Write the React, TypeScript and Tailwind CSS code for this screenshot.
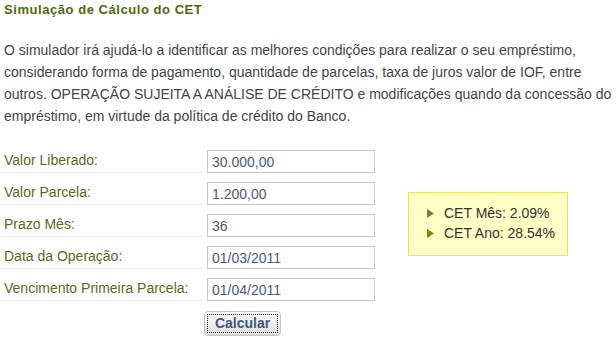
import React from "react";

const fields = [
  { label: "Valor Liberado:", value: "30.000,00" },
  { label: "Valor Parcela:", value: "1.200,00" },
  { label: "Prazo Mês:", value: "36" },
  { label: "Data da Operação:", value: "01/03/2011" },
  { label: "Vencimento Primeira Parcela:", value: "01/04/2011" },
];

const results = ["CET Mês: 2.09%", "CET Ano: 28.54%"];

export default function App() {
  return (
    <div className="w-[616px] h-[338px] overflow-hidden bg-white font-['Liberation_Sans',Arial,sans-serif]">
      <h1 className="pl-1 pt-[1px] text-[13px] leading-[17px] font-bold tracking-[0.55px] text-[#4b6a0f]">
        Simulação de Cálculo do CET
      </h1>

      <p className="mt-[21px] pl-1 pr-1 text-[14px] leading-[22px] text-[#444]">
        O simulador irá ajudá-lo a identificar as melhores condições para realizar o seu empréstimo,
        considerando forma de pagamento, quantidade de parcelas, taxa de juros valor de IOF, entre
        outros. OPERAÇÃO SUJEITA A ANÁLISE DE CRÉDITO e modificações quando da concessão do
        empréstimo, em virtude da política de crédito do Banco.
      </p>

      <div className="mt-[14px] flex items-start">
        <form className="flex flex-col" onSubmit={(e) => e.preventDefault()}>
          {fields.map((f) => (
            <div key={f.label} className="flex items-start h-[32px]">
              <label className="w-[201px] h-[32px] border-b border-[#ebebeb] pl-1 pt-[11px] text-[14px] leading-[17px] text-[#5b6a26]">
                {f.label}
              </label>
              <input
                readOnly
                defaultValue={f.value}
                className="ml-[6px] mt-[9px] w-[168px] h-[23px] border border-[#c8c8c8] bg-white px-[4px] text-[14px] leading-[21px] text-[#4c5b7a] outline-none"
              />
            </div>
          ))}
          <div className="pl-[204px] mt-[10px]">
            <button
              type="submit"
              className="w-[77px] h-[25px] rounded-[4px] border border-[#c4c4c4] bg-gradient-to-b from-[#fdfdfd] to-[#dedede] p-[2px]"
            >
              <span className="block h-full border border-dotted border-[#222] text-[14px] leading-[17px] font-bold text-[#3f5a80]">
                Calcular
              </span>
            </button>
          </div>
        </form>

        <div className="ml-[33px] mt-[51px] w-[160px] h-[64px] border border-[#f0e35a] bg-[#ffffc6] pl-[18px] pt-[10px]">
          {results.map((r) => (
            <div key={r} className="flex items-center h-[20px] text-[14px] text-[#333]">
              <svg width="7" height="9" viewBox="0 0 7 9" className="mr-[10px] shrink-0">
                <polygon points="0,0 7,4.5 0,9" fill="#6b8a1e" />
              </svg>
              {r}
            </div>
          ))}
        </div>
      </div>
    </div>
  );
}
